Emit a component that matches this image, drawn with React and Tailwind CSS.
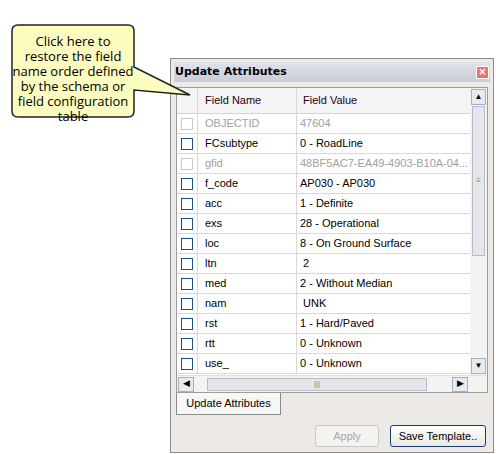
export default function App() {
  const rows = [
    ["OBJECTID", "47604", true],
    ["FCsubtype", "0 - RoadLine"],
    ["gfid", "48BF5AC7-EA49-4903-B10A-04...", true],
    ["f_code", "AP030 - AP030"],
    ["acc", "1 - Definite"],
    ["exs", "28 - Operational"],
    ["loc", "8 - On Ground Surface"],
    ["ltn", " 2"],
    ["med", "2 - Without Median"],
    ["nam", " UNK"],
    ["rst", "1 - Hard/Paved"],
    ["rtt", "0 - Unknown"],
    ["use_", "0 - Unknown"],
  ];
  const f = { fontFamily: "Tahoma, 'DejaVu Sans', sans-serif" };
  const a = { fontFamily: "'Liberation Sans', Arial, sans-serif" };
  return (
    <div className="relative w-[496px] h-[454px] bg-white overflow-hidden" style={a}>
      <div className="absolute left-[170px] top-[58px] w-[324px] h-[395px] border border-[#8c8c8c] bg-[#ece9e6] p-[3px] flex flex-col">
        <div className="h-[20px] flex items-center justify-between px-[1px] bg-gradient-to-b from-[#e2e4ec] to-[#c9ccd8] text-[11px] font-bold text-black" style={f}>
          <span>Update Attributes</span>
          <span className="w-[13px] h-[13px] bg-[#e6776e] border border-white text-white text-[10px] leading-[10px] text-center">×</span>
        </div>
        <div className="mt-[5px] mx-[2px] border border-[#9c9c9c] bg-white flex flex-col h-[306px]">
          <div className="flex flex-1 overflow-hidden">
            <div className="flex-1 text-[11px]">
              <div className="flex h-[26px] bg-[#f4f4f4] border-b border-[#d4d4d4]">
                <div className="w-[21px] border-r border-[#d8d8d8]" />
                <div className="w-[99px] border-r border-[#d8d8d8] flex items-center pl-[7px] text-[#220022]">Field Name</div>
                <div className="flex-1 flex items-center pl-[6px] text-[#220022]">Field Value</div>
              </div>
              {rows.map(([n, v, g]) => (
                <div key={n} className="flex h-[20px] border-b border-[#d8d8d8]">
                  <div className="w-[21px] border-r border-[#d8d8d8] flex items-center justify-center">
                    <div className={`w-[12px] h-[12px] border ${g ? "border-[#c8c8c8]" : "border-[#1c5180]"} bg-white`} />
                  </div>
                  <div className={`w-[99px] border-r border-[#d8d8d8] flex items-center pl-[7px] ${g ? "text-[#a0a0a0]" : "text-black"}`}>{n}</div>
                  <div className={`flex-1 flex items-center pl-[3px] whitespace-pre overflow-hidden ${g ? "text-[#a0a0a0]" : "text-black"}`}>{v}</div>
                </div>
              ))}
            </div>
            <div className="w-[17px] bg-[#f3f3f1] flex flex-col items-center py-[1px]">
              <div className="w-[15px] h-[16px] border border-[#a4b0c8] bg-[#e8eaf0] text-[8px] flex items-center justify-center">▲</div>
              <div className="w-[13px] h-[150px] mt-[1px] border border-[#b8bcc8] bg-[#e4e6ea] flex items-center justify-center text-[8px] text-[#888]">≡</div>
              <div className="flex-1" />
              <div className="w-[15px] h-[16px] border border-[#a4b0c8] bg-[#e8eaf0] text-[8px] flex items-center justify-center">▼</div>
            </div>
          </div>
          <div className="h-[17px] bg-[#f3f3f1] flex items-center px-[1px] border-t border-[#e0e0e0]">
            <div className="w-[16px] h-[15px] border border-[#a4b0c8] bg-[#e8eaf0] text-[9px] flex items-center justify-center">◀</div>
            <div className="w-[220px] h-[13px] ml-[13px] border border-[#b8bcc8] bg-[#e4e6ea] flex items-center justify-center text-[8px] text-[#888]">|||</div>
            <div className="flex-1" />
            <div className="w-[16px] h-[15px] border border-[#a4b0c8] bg-[#e8eaf0] text-[9px] flex items-center justify-center mr-[18px]">▶</div>
          </div>
        </div>
        <div className="flex">
          <div className="ml-[2px] w-[105px] h-[22px] border border-t-0 border-[#8c8c8c] bg-[#f7f7f5] text-[11px] flex items-center justify-center">Update Attributes</div>
        </div>
        <div className="flex justify-end gap-[11px] mt-[10px] mr-[4px]">
          <div className="w-[64px] h-[22px] border border-[#c8c8c8] rounded-[3px] text-[#a8a8a8] text-[11px] flex items-center justify-center bg-[#f4f3ee]">Apply</div>
          <div className="w-[96px] h-[22px] border border-[#1c3a70] rounded-[3px] text-black text-[11px] flex items-center justify-center bg-gradient-to-b from-white to-[#e8e8e4]">Save Template..</div>
        </div>
      </div>
      <svg className="absolute left-0 top-0" width="210" height="130">
        <path d="M18 25 H128 Q134 25 134 31 V67 L190 95 L134 90 V111 Q134 117 128 117 H18 Q12 117 12 111 V31 Q12 25 18 25 Z" fill="#fdfcc0" stroke="#222" strokeWidth="1.5" />
      </svg>
      <div className="absolute left-[12px] top-[34px] w-[122px] text-center text-[13px] leading-[15px] text-black" style={{ fontFamily: "'Open Sans', Tahoma, sans-serif" }}>
        Click here to restore the field name order defined by the schema or field configuration table
      </div>
    </div>
  );
}
